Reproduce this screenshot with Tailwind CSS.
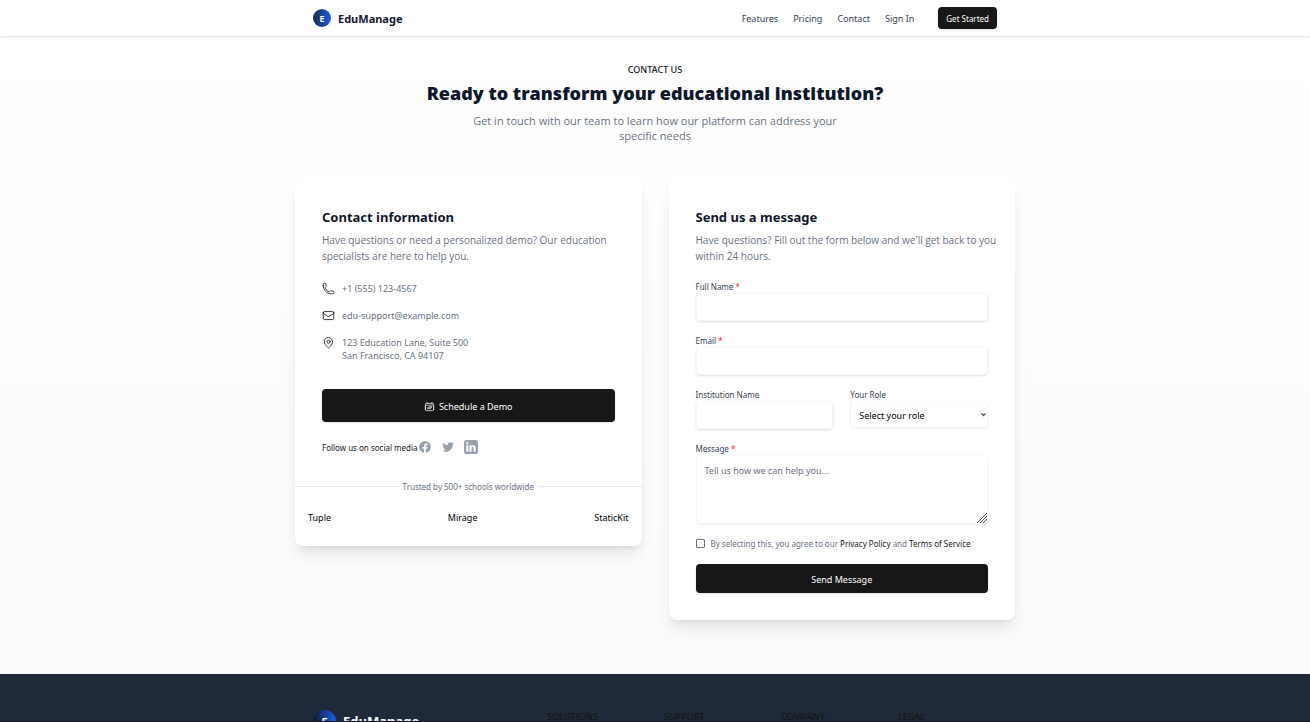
<!DOCTYPE html>
<html lang="en">
<head>
<meta charset="utf-8">
<meta name="viewport" content="width=device-width, initial-scale=1">
<title>EduManage – Contact</title>
<script src="https://cdn.jsdelivr.net/npm/@tailwindcss/browser@4"></script>
</head>
<body class="min-h-screen bg-linear-to-b from-white to-slate-50 font-['Noto_Sans',sans-serif] text-[9px] leading-[13px] text-gray-500">
<header class="relative bg-white shadow-sm shadow-black/10">
  <div class="mx-auto flex h-9 max-w-[684px] items-center justify-between">
    <a href="#" class="flex items-center gap-[7px] text-[11px] font-bold text-slate-900">
      <span class="flex size-[18px] items-center justify-center rounded-full bg-linear-to-r from-slate-800 to-blue-600 text-[9px] text-white">E</span>
      EduManage
    </a>
    <nav class="flex items-center gap-[15px] text-gray-700">
      <a href="#">Features</a>
      <a href="#">Pricing</a>
      <a href="#">Contact</a>
      <a href="#">Sign In</a>
      <button class="ml-[9px] h-[22px] rounded bg-neutral-900 px-2 text-[8px] text-white shadow-sm">Get Started</button>
    </nav>
  </div>
</header>

<main class="px-4 pb-[54px] pt-[27px]">
  <div class="mx-auto max-w-[720px] text-center">
    <p class="font-medium text-neutral-900">CONTACT US</p>
    <h1 class="mt-[6px] font-['Open_Sans',sans-serif] text-[18px] font-extrabold leading-[22px] text-slate-900">Ready to transform your educational institution?</h1>
    <p class="mx-auto mt-[9px] max-w-[378px] font-['Open_Sans',sans-serif] text-[11px] leading-[15px]">Get in touch with our team to learn how our platform can address your specific needs</p>
  </div>

  <div class="mx-auto mt-9 grid max-w-[720px] grid-cols-2 items-start gap-[27px]">
    <section class="rounded-lg bg-white pb-[22px] shadow-lg">
      <div class="px-[27px] pt-[27px]">
        <h2 class="text-[13px] font-bold leading-[22px] text-slate-900">Contact information</h2>
        <p class="mt-1 font-['Open_Sans',sans-serif] text-[10px] leading-4">Have questions or need a personalized demo? Our education specialists are here to help you.</p>
        <ul class="mt-[18px] flex flex-col gap-[14px]">
          <li class="flex gap-[7px]">
            <svg class="size-[13px] shrink-0 text-neutral-900" viewBox="0 0 24 24" fill="none" stroke="currentColor" stroke-width="1.5" stroke-linecap="round" stroke-linejoin="round" aria-hidden="true"><path d="M2.25 6.75c0 8.284 6.716 15 15 15h2.25a2.25 2.25 0 0 0 2.25-2.25v-1.372c0-.516-.351-.966-.852-1.091l-4.423-1.106c-.44-.11-.902.055-1.173.417l-.97 1.293c-.282.376-.769.542-1.21.38a12.035 12.035 0 0 1-7.143-7.143c-.162-.441.004-.928.38-1.21l1.293-.97c.363-.271.527-.734.417-1.173L6.963 3.102a1.125 1.125 0 0 0-1.091-.852H4.5A2.25 2.25 0 0 0 2.25 4.5v2.25Z"/></svg>
            <span>+1 (555) 123-4567</span>
          </li>
          <li class="flex gap-[7px]">
            <svg class="size-[13px] shrink-0 text-neutral-900" viewBox="0 0 24 24" fill="none" stroke="currentColor" stroke-width="1.5" stroke-linecap="round" stroke-linejoin="round" aria-hidden="true"><path d="M21.75 6.75v10.5a2.25 2.25 0 0 1-2.25 2.25h-15a2.25 2.25 0 0 1-2.25-2.25V6.75m19.5 0A2.25 2.25 0 0 0 19.5 4.5h-15a2.25 2.25 0 0 0-2.25 2.25m19.5 0v.243a2.25 2.25 0 0 1-1.07 1.916l-7.5 4.615a2.25 2.25 0 0 1-2.36 0L3.32 8.91a2.25 2.25 0 0 1-1.07-1.916V6.75"/></svg>
            <span>edu-support@example.com</span>
          </li>
          <li class="flex gap-[7px]">
            <svg class="size-[13px] shrink-0 text-neutral-900" viewBox="0 0 24 24" fill="none" stroke="currentColor" stroke-width="1.5" stroke-linecap="round" stroke-linejoin="round" aria-hidden="true"><path d="M15 10.5a3 3 0 1 1-6 0 3 3 0 0 1 6 0Z"/><path d="M19.5 10.5c0 7.142-7.5 11.25-7.5 11.25S4.5 17.642 4.5 10.5a7.5 7.5 0 1 1 15 0Z"/></svg>
            <span>123 Education Lane, Suite 500<br>San Francisco, CA 94107</span>
          </li>
        </ul>
        <button class="mt-[27px] flex h-[33px] w-full items-center justify-center gap-1 rounded bg-neutral-900 pt-[2px] text-white shadow-sm">
          <svg class="size-[11px]" viewBox="0 0 24 24" fill="none" stroke="currentColor" stroke-width="1.5" stroke-linecap="round" stroke-linejoin="round" aria-hidden="true"><path d="M6.75 3v2.25M17.25 3v2.25M3 18.75V7.5a2.25 2.25 0 0 1 2.25-2.25h13.5A2.25 2.25 0 0 1 21 7.5v11.25m-18 0A2.25 2.25 0 0 0 5.25 21h13.5A2.25 2.25 0 0 0 21 18.75m-18 0v-7.5A2.25 2.25 0 0 1 5.25 9h13.5A2.25 2.25 0 0 1 21 11.25v7.5m-9-6h.008v.008H12v-.008ZM12 15h.008v.008H12V15Zm0 2.25h.008v.008H12v-.008ZM9.75 15h.008v.008H9.75V15Zm0 2.25h.008v.008H9.75v-.008ZM7.5 15h.008v.008H7.5V15Zm0 2.25h.008v.008H7.5v-.008Zm6.75-4.5h.008v.008h-.008v-.008Zm0 2.25h.008v.008h-.008V15Zm0 2.25h.008v.008h-.008v-.008Zm2.25-4.5h.008v.008H16.500v-.008Zm0 2.25h.008v.008H16.500V15Z"/></svg>
          Schedule a Demo
        </button>
        <div class="mt-[18px] flex h-[14px] items-center text-[8px] text-gray-900">
          <span>Follow us on social media</span>
          <span class="flex items-center gap-[9px] text-gray-400">
            <a href="#" aria-label="Facebook"><svg class="size-[14px]" viewBox="0 0 24 24" fill="currentColor"><path fill-rule="evenodd" d="M22 12c0-5.523-4.477-10-10-10S2 6.477 2 12c0 4.991 3.657 9.128 8.438 9.878v-6.987h-2.54V12h2.54V9.797c0-2.506 1.492-3.89 3.777-3.89 1.094 0 2.238.195 2.238.195v2.46h-1.26c-1.243 0-1.63.771-1.63 1.562V12h2.773l-.443 2.89h-2.33v6.988C18.343 21.128 22 16.991 22 12z" clip-rule="evenodd"/></svg></a>
            <a href="#" aria-label="Twitter"><svg class="size-[14px]" viewBox="0 0 24 24" fill="currentColor"><path d="M8.29 20.251c7.547 0 11.675-6.253 11.675-11.675 0-.178 0-.355-.012-.53A8.348 8.348 0 0022 5.92a8.19 8.19 0 01-2.357.646 4.118 4.118 0 001.804-2.27 8.224 8.224 0 01-2.605.996 4.107 4.107 0 00-6.993 3.743 11.65 11.65 0 01-8.457-4.287 4.106 4.106 0 001.27 5.477A4.072 4.072 0 012.8 9.713v.052a4.105 4.105 0 003.292 4.022 4.095 4.095 0 01-1.853.07 4.108 4.108 0 003.834 2.85A8.233 8.233 0 012 18.407a11.616 11.616 0 006.29 1.84"/></svg></a>
            <a href="#" aria-label="LinkedIn"><svg class="size-[14px]" viewBox="0 0 24 24" fill="currentColor"><path fill-rule="evenodd" d="M4 0h16a4 4 0 0 1 4 4v16a4 4 0 0 1-4 4H4a4 4 0 0 1-4-4V4a4 4 0 0 1 4-4ZM4 9v11h3.400V9H4Zm1.700-5.300a2 2 0 1 0 0 4 2 2 0 0 0 0-4ZM9.500 9v11h3.400v-5.700c0-3 3.700-3.200 3.700 0V20H20v-6.800c0-5.200-5.400-5-7.100-2.500V9H9.500Z"/></svg></a>
          </span>
        </div>
      </div>
      <div class="mt-[26px] flex items-center gap-[4px] text-[8px]">
        <span class="h-px flex-1 bg-gray-200"></span>
        <span>Trusted by 500+ schools worldwide</span>
        <span class="h-px flex-1 bg-gray-200"></span>
      </div>
      <div class="mt-[18px] flex justify-between px-[13px] text-black">
        <span>Tuple</span><span>Mirage</span><span>StaticKit</span>
      </div>
    </section>

    <section class="rounded-lg bg-white p-[27px] shadow-lg">
      <h2 class="text-[13px] font-bold leading-[22px] text-slate-900">Send us a message</h2>
      <p class="mt-1 whitespace-nowrap font-['Open_Sans',sans-serif] text-[10px] leading-4">Have questions? Fill out the form below and we'll get back to you<br>within 24 hours.</p>
      <form class="mt-[16px]">
        <div class="flex flex-col">
          <label for="name" class="text-[8px] text-gray-700">Full Name <span class="text-red-500">*</span></label>
          <input id="name" type="text" class="h-7 rounded border border-gray-100 border-t-gray-50 px-2 shadow-sm">
        </div>
        <div class="mt-[13px] flex flex-col">
          <label for="email" class="text-[8px] text-gray-700">Email <span class="text-red-500">*</span></label>
          <input id="email" type="email" class="h-7 rounded border border-gray-100 border-t-gray-50 px-2 shadow-sm">
        </div>
        <div class="mt-[13px] grid grid-cols-2 gap-[17px]">
          <div class="flex flex-col">
            <label for="inst" class="text-[8px] text-gray-700">Institution Name</label>
            <input id="inst" type="text" class="h-7 rounded border border-gray-100 border-t-gray-50 px-2 shadow-sm">
          </div>
          <div class="flex flex-col">
            <label for="role" class="text-[8px] text-gray-700">Your Role</label>
            <div class="relative">
              <select id="role" class="h-[27px] w-full appearance-none rounded border border-gray-100 border-t-gray-50 bg-white px-2 pt-px text-black shadow-xs"><option>Select your role</option></select>
              <svg class="pointer-events-none absolute right-[2px] top-[11px] size-[5px] text-gray-600" viewBox="0 0 10 10" fill="none" stroke="currentColor" stroke-width="2.500" aria-hidden="true"><path d="M1 3l4 4 4-4"/></svg>
            </div>
          </div>
        </div>
        <div class="mt-[13px] flex flex-col">
          <label for="msg" class="text-[8px] text-gray-700">Message <span class="text-red-500">*</span></label>
          <div class="relative flex">
            <textarea id="msg" class="h-[69px] w-full resize-none rounded border border-gray-100 border-t-gray-50 px-2 py-[8px] shadow-xs placeholder:text-gray-500" placeholder="Tell us how we can help you..."></textarea>
            <svg class="pointer-events-none absolute bottom-[1px] right-[1px] size-[11px] text-gray-600" viewBox="0 0 11 11" fill="none" stroke="currentColor" aria-hidden="true"><path d="M1 11 11 1M4 11l7-7M7 11l4-4"/></svg>
          </div>
        </div>
        <div class="mt-[13px] flex items-center gap-[6px] text-[8px]">
          <input id="agree" type="checkbox" class="size-[9px] appearance-none rounded-[1px] border border-gray-500 bg-white">
          <label for="agree">By selecting this, you agree to our <a href="#" class="text-neutral-900">Privacy Policy</a> and <a href="#" class="text-neutral-900">Terms of Service</a>.</label>
        </div>
        <button type="button" class="mt-[14px] h-[29px] w-full rounded bg-neutral-900 pt-[2px] text-white shadow-sm">Send Message</button>
      </form>
    </section>
  </div>
</main>

<footer class="h-12 overflow-hidden border-b border-gray-900 bg-gray-800">
  <div class="mx-auto flex max-w-[684px] pt-9">
    <a href="#" class="flex w-[234px] items-center gap-[7px] text-[13px] font-bold text-white">
      <span class="flex size-[23px] items-center justify-center rounded-full bg-linear-to-r from-slate-900 to-blue-600 text-[11px]">E</span>
      EduManage
    </a>
    <div class="grid flex-1 grid-cols-[117px_117px_117px_1fr] font-medium text-neutral-900">
      <h3>SOLUTIONS</h3><h3>SUPPORT</h3><h3>COMPANY</h3><h3>LEGAL</h3>
    </div>
  </div>
</footer>
</body>
</html>
